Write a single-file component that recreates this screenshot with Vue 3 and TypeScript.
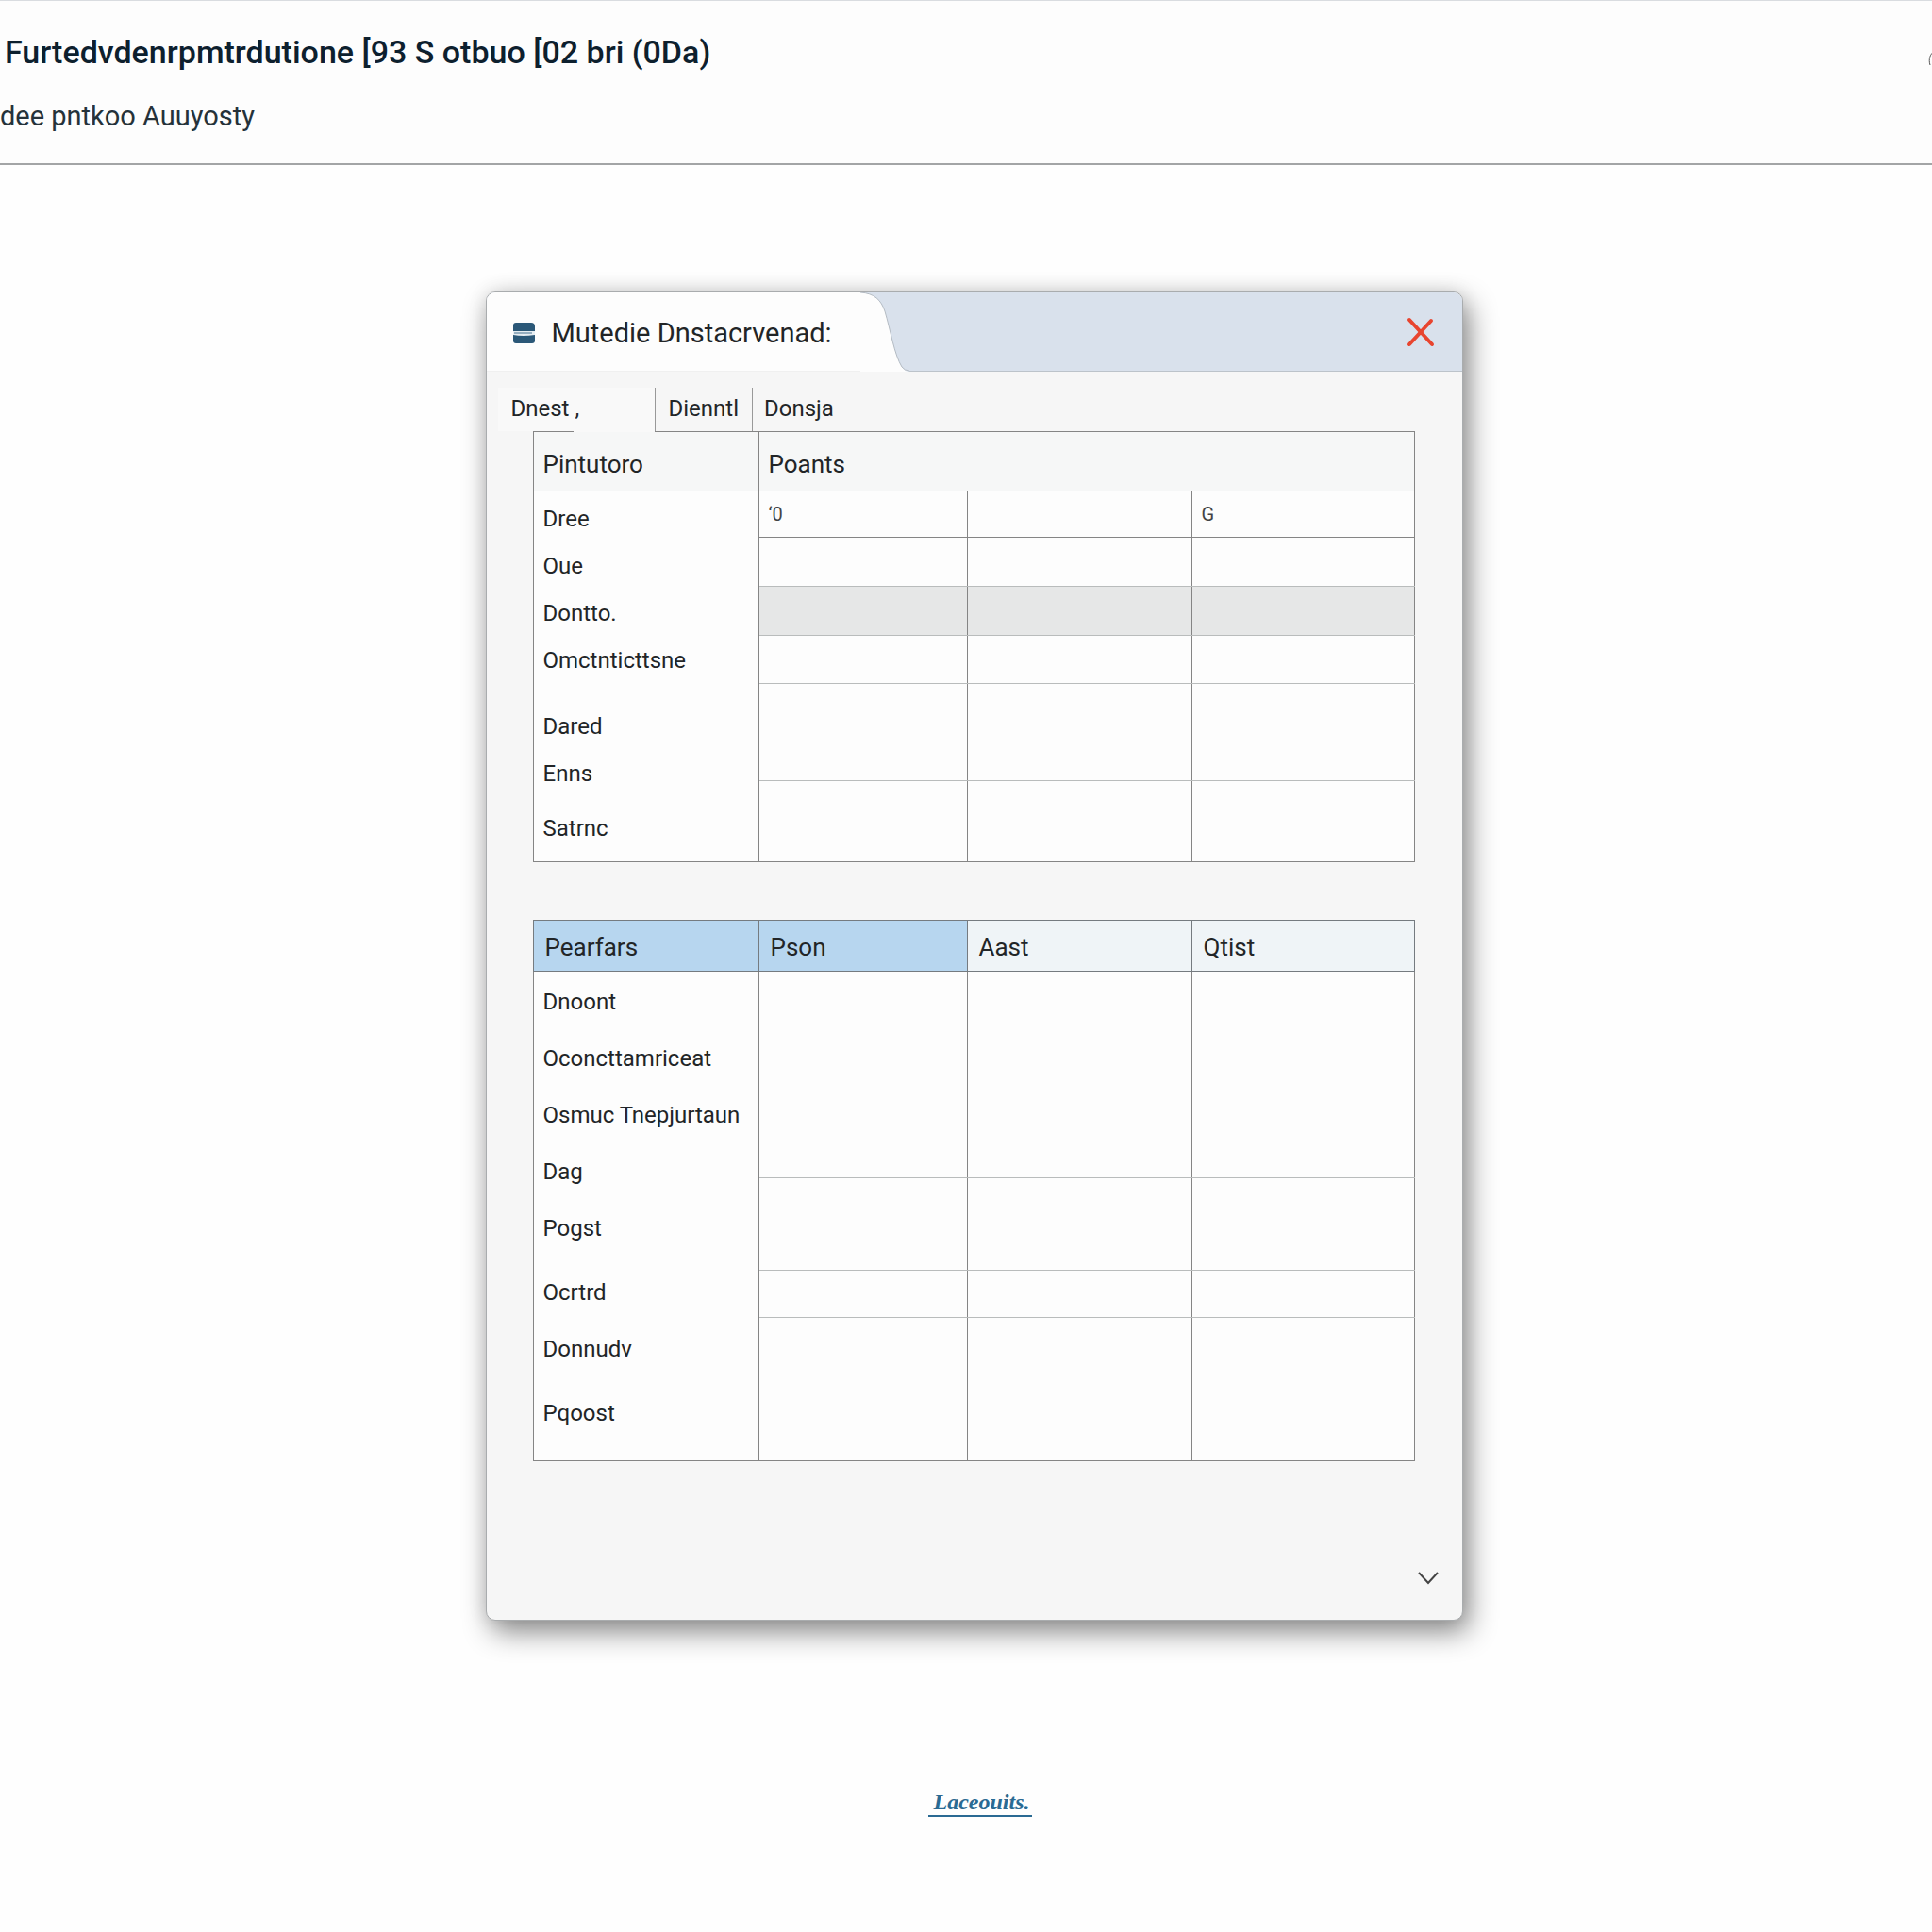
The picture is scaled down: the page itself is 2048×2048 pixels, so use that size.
<script setup lang="ts">
type Gap = 'none' | 'small' | 'large'

interface Label {
  text: string
  gap: Gap
}

interface Row {
  height: number
  cells: string[]
  kind: 'sub' | 'plain' | 'shaded'
}

const tabs: string[] = ['Dnest ,', 'Dienntl', 'Donsja']

const pointLabels: Label[] = [
  { text: 'Dree', gap: 'none' },
  { text: 'Oue', gap: 'none' },
  { text: 'Dontto.', gap: 'none' },
  { text: 'Omctnticttsne', gap: 'none' },
  { text: 'Dared', gap: 'large' },
  { text: 'Enns', gap: 'none' },
  { text: 'Satrnc', gap: 'small' },
]

const pointRows: Row[] = [
  { height: 49, cells: ['‘0', '', 'G'], kind: 'sub' },
  { height: 52, cells: ['', '', ''], kind: 'plain' },
  { height: 52, cells: ['', '', ''], kind: 'shaded' },
  { height: 51, cells: ['', '', ''], kind: 'plain' },
  { height: 103, cells: ['', '', ''], kind: 'plain' },
  { height: 86, cells: ['', '', ''], kind: 'plain' },
]

const entryHeads: string[] = ['Pearfars', 'Pson', 'Aast', 'Qtist']

const entryLabels: Label[] = [
  { text: 'Dnoont', gap: 'none' },
  { text: 'Oconcttamriceat', gap: 'none' },
  { text: 'Osmuc Tnepjurtaun', gap: 'none' },
  { text: 'Dag', gap: 'none' },
  { text: 'Pogst', gap: 'none' },
  { text: 'Ocrtrd', gap: 'small' },
  { text: 'Donnudv', gap: 'none' },
  { text: 'Pqoost', gap: 'small' },
]

const entryRowHeights: number[] = [219, 98, 50, 152]
</script>

<template>
  <div class="page">
    <header class="page-head">
      <div>
        <h1>Furtedvdenrpmtrdutione [93 S otbuo [02 bri (0Da)</h1>
        <p>dee pntkoo Auuyosty</p>
      </div>
      <button class="edge-button" type="button" aria-label="Account">
        <svg width="24" height="24" viewBox="0 0 24 24" fill="none" stroke="#555" stroke-width="1">
          <path d="M2 18 C0 12 2 6 6 4 H18 V18" />
        </svg>
      </button>
    </header>

    <main>
      <section class="dialog" aria-labelledby="dialog-title">
        <div class="titlebar">
          <div class="title-tab">
            <svg class="logo" width="23" height="22" viewBox="0 0 23 22">
              <path d="M3 0 H19 Q23 0 23 4 V9 H0 V3 Q0 0 3 0 Z" fill="#2b5878" />
              <path d="M0 9 H23 V14 H0 Z" fill="#e6edf2" />
              <path d="M1 11 H20" stroke="#46708e" stroke-width="1" />
              <path d="M0 13 Q10 15 23 13 V19 Q23 22 20 22 H3 Q0 22 0 19 Z" fill="#2b5878" />
            </svg>
            <h2 id="dialog-title">Mutedie Dnstacrvenad:</h2>
          </div>
          <svg class="curve" width="52" height="84" viewBox="0 0 52 84">
            <path d="M0 0 C15 1 22 8 26 20 C32 40 36 66 44 79 Q47 84 52 84 H0 Z" fill="#fdfdfd" />
            <path d="M0 0 C15 1 22 8 26 20 C32 40 36 66 44 79 Q47 83 52 83" fill="none" stroke="#b4bbc3" />
          </svg>
          <div class="title-rest">
            <button class="close" type="button" aria-label="Close">
              <svg width="30" height="32" viewBox="0 0 30 32" stroke="#e8452f" stroke-width="4" stroke-linecap="round">
                <path d="M3 3 L27 29 M26 4 L3 29" />
              </svg>
            </button>
          </div>
        </div>

        <nav class="tabs">
          <button
            v-for="(tab, i) in tabs"
            :key="tab"
            type="button"
            :class="['tab', { active: i === 0 }]"
          >{{ tab }}</button>
        </nav>

        <div class="content">
          <table>
            <colgroup>
              <col class="c1"><col class="c2"><col class="c3"><col class="c4">
            </colgroup>
            <thead>
              <tr class="band">
                <th scope="col">Pintutoro</th>
                <th scope="colgroup" colspan="3">Poants</th>
              </tr>
            </thead>
            <tbody>
              <tr v-for="(row, r) in pointRows" :key="r" :class="row.kind" :style="{ height: row.height + 'px' }">
                <td v-if="r === 0" class="labels" :rowspan="pointRows.length">
                  <ul class="tight">
                    <li v-for="label in pointLabels" :key="label.text" :class="label.gap">{{ label.text }}</li>
                  </ul>
                </td>
                <td v-for="(cell, c) in row.cells" :key="c">{{ cell }}</td>
              </tr>
            </tbody>
          </table>

          <table>
            <colgroup>
              <col class="c1"><col class="c2"><col class="c3"><col class="c4">
            </colgroup>
            <thead>
              <tr class="heads">
                <th v-for="(head, i) in entryHeads" :key="head" scope="col" :class="{ picked: i < 2 }">{{ head }}</th>
              </tr>
            </thead>
            <tbody>
              <tr v-for="(height, r) in entryRowHeights" :key="r" :style="{ height: height + 'px' }">
                <td v-if="r === 0" class="labels" :rowspan="entryRowHeights.length">
                  <ul class="loose">
                    <li v-for="label in entryLabels" :key="label.text" :class="label.gap">{{ label.text }}</li>
                  </ul>
                </td>
                <td></td>
                <td></td>
                <td></td>
              </tr>
            </tbody>
          </table>
        </div>

        <div class="dialog-foot">
          <button type="button" aria-label="More">
            <svg width="22" height="16" viewBox="0 0 22 16" fill="none" stroke="#444" stroke-width="2">
              <path d="M1 2 L11 13 L21 2" />
            </svg>
          </button>
        </div>
      </section>

      <a class="more" href="#">Laceouits.</a>
    </main>
  </div>
</template>

<style>
body {
  margin: 0;
  background: #fefefe;
}
</style>

<style scoped>
.page {
  min-height: 100vh;
  box-sizing: border-box;
  overflow: hidden;
  color: #222527;
  font-family: Roboto, "Liberation Sans", sans-serif;
  font-size: 24px;
}

button {
  padding: 0;
  border: 0;
  background: none;
  color: inherit;
  font: inherit;
}

svg {
  display: block;
}

.page-head {
  display: flex;
  justify-content: space-between;
  box-sizing: border-box;
  height: 175px;
  padding: 34px 0 0 5px;
  border-top: 1px solid #d9dce0;
  border-bottom: 2px solid #a3a5a6;
  background: #fdfdfd;
}

h1 {
  margin: 0;
  color: #0d202e;
  font-size: 34px;
  font-weight: 500;
  line-height: 40px;
}

.page-head p {
  margin: 28px 0 0 -5px;
  color: #25323a;
  font-size: 29px;
  line-height: 40px;
}

.edge-button {
  align-self: flex-start;
  margin: 16px -20px 0 0;
}

main {
  display: flex;
  flex-direction: column;
  align-items: center;
  padding: 134px 0 100px 17px;
}

.dialog {
  box-sizing: border-box;
  width: 100%;
  max-width: 1036px;
  border: 1px solid #a9acae;
  border-radius: 10px;
  background: #f6f6f6;
  box-shadow: 6px 12px 30px rgba(0, 0, 0, 0.45), 0 0 20px rgba(0, 0, 0, 0.1);
}

.titlebar {
  display: flex;
  height: 84px;
  overflow: hidden;
  border-radius: 9px 9px 0 0;
  background: #d9e1ec;
}

.title-tab {
  display: flex;
  flex: none;
  align-items: center;
  gap: 18px;
  box-sizing: border-box;
  width: 38%;
  min-width: 396px;
  padding: 2px 0 0 28px;
  border-bottom: 1px solid #f0f0f0;
  background: #fdfdfd;
}

.curve {
  flex: none;
}

h2 {
  margin: 0;
  font-size: 29px;
  font-weight: 400;
  line-height: 36px;
  white-space: nowrap;
}

.title-rest {
  display: flex;
  flex: 1;
  align-items: center;
  justify-content: flex-end;
  padding-right: 29px;
  border-bottom: 1px solid #bcc3ca;
}

.tabs {
  display: flex;
  align-items: stretch;
  height: 46px;
  padding: 17px 0 0 12px;
}

.tab {
  padding: 0 14px 2px;
  border-left: 1px solid #999;
  text-align: left;
}

.tab:last-child {
  padding-left: 12px;
}

.tab.active {
  position: relative;
  width: 166px;
  border-left: 0;
  background: #f9f9f9;
}

.tab.active::after {
  content: "";
  position: absolute;
  right: 0;
  bottom: -1px;
  width: 86px;
  height: 1px;
  background: #f9f9f9;
}

.content {
  display: flex;
  flex-direction: column;
  gap: 61px;
  padding: 0 50px 0 49px;
}

table {
  width: 100%;
  table-layout: fixed;
  border: 1px solid #858585;
  border-collapse: collapse;
  background: #fdfdfd;
}

.c1 {
  width: 239px;
}

.c2 {
  width: 221px;
}

.c3 {
  width: 238px;
}

th,
td {
  box-sizing: border-box;
  padding: 0 10px;
  border-right: 1px solid #858585;
  border-left: 1px solid #858585;
  font-weight: 400;
  text-align: left;
}

td {
  border-bottom: 1px solid #b9bcbc;
}

.band {
  height: 63px;
  background: #f6f7f7;
}

.band th {
  padding-top: 5px;
  font-size: 26px;
}

.band th + th {
  border-bottom: 1px solid #858585;
}

.sub td {
  border-bottom-color: #858585;
  color: #444;
  font-size: 20px;
}

.shaded td {
  background: #e6e7e7;
}

tr .labels {
  padding: 0;
  border-bottom-color: #858585;
  color: #222527;
  font-size: 24px;
  vertical-align: top;
}

tbody tr:last-child td {
  border-bottom-color: #858585;
}

.heads {
  height: 54px;
}

.heads th {
  padding: 3px 12px 0;
  border: 1px solid #757b80;
  background: #eff4f7;
  font-size: 26px;
}

.heads .picked {
  background: #b7d6ef;
}

ul {
  margin: 0;
  padding: 0;
  list-style: none;
  white-space: nowrap;
}

li {
  padding-left: 10px;
}

.tight {
  padding-top: 4px;
}

.tight li {
  line-height: 50px;
}

.loose {
  padding-top: 2px;
}

.loose li {
  line-height: 60px;
}

li.small {
  margin-top: 8px;
}

li.large {
  margin-top: 20px;
}

.dialog-foot {
  display: flex;
  justify-content: flex-end;
  padding: 116px 25px 36px 0;
}

.more {
  margin: 178px 0 0 12px;
  padding: 0 2px 0 6px;
  border-bottom: 2px solid #2a6a93;
  color: #2a6a93;
  font-family: "Liberation Serif", serif;
  font-size: 24px;
  font-style: italic;
  font-weight: 700;
  line-height: 28px;
  text-decoration: none;
}
</style>
